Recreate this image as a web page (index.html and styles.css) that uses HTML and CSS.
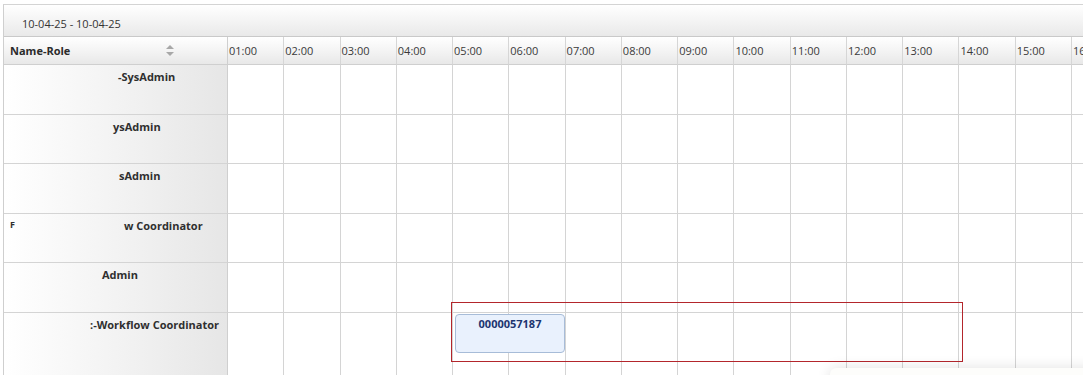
FILE: index.html
```html
<!DOCTYPE html>
<html lang="en">
<head>
  <meta charset="UTF-8">
  <meta name="viewport" content="width=device-width, initial-scale=1.0">
  <title>Scheduler - Timeline</title>
  <link rel="stylesheet" href="styles.css">
</head>
<body>
  <div class="scheduler">
    <div class="toolbar">
      <span class="range">10-04-25 - 10-04-25</span>
    </div>

    <div class="timeline" id="timeline">
      <div class="head-name">
        <span>Name-Role</span>
        <svg class="sort" width="8" height="11" viewBox="0 0 8 11">
          <path d="M4 0 L8 4 L0 4 Z" fill="#a8a8a8"/>
          <path d="M0 7 L8 7 L4 11 Z" fill="#a8a8a8"/>
        </svg>
      </div>
      <!-- hour headers + rows are generated below -->
    </div>

    <div class="selection"></div>
    <div class="event">0000057187</div>
  </div>
  <div class="popup-shadow"></div>

  <script>
    const rows = [
      { text: '-SysAdmin', indent: 114 },
      { text: 'ysAdmin', indent: 109 },
      { text: 'sAdmin', indent: 115 },
      { text: 'w Coordinator', indent: 120, stray: 'F' },
      { text: 'Admin', indent: 98 },
      { text: ':-Workflow Coordinator', indent: 86 }
    ];

    const timeline = document.getElementById('timeline');

    for (let h = 1; h <= 16; h++) {
      const th = document.createElement('div');
      th.className = 'head-hour';
      th.textContent = String(h).padStart(2, '0') + ':00';
      timeline.appendChild(th);
    }

    rows.forEach(row => {
      const name = document.createElement('div');
      name.className = 'row-name';
      if (row.stray) {
        const s = document.createElement('span');
        s.className = 'stray';
        s.textContent = row.stray;
        name.appendChild(s);
      }
      const t = document.createElement('span');
      t.className = 'label';
      t.style.marginLeft = row.indent + 'px';
      t.textContent = row.text;
      name.appendChild(t);
      timeline.appendChild(name);

      for (let h = 1; h <= 16; h++) {
        const slot = document.createElement('div');
        slot.className = 'slot';
        timeline.appendChild(slot);
      }
    });
  </script>
</body>
</html>
```

FILE: styles.css
```css
body {
  margin: 0;
  padding: 0;
  background-color: #ffffff;
  font-family: 'Open Sans', 'Noto Sans', sans-serif;
  font-size: 11px;
  color: #333333;
  overflow: hidden;
  width: 1083px;
  height: 375px;
}

.scheduler {
  position: relative;
  margin: 4px 0 0 3px;
  width: 1090px;
  border-top: 1px solid #d4d4d4;
  border-left: 1px solid #cfcfcf;
}

.toolbar {
  height: 31px;
  display: flex;
  align-items: center;
  padding-left: 18px;
  background: linear-gradient(to bottom, #ffffff 0%, #f4f4f4 50%, #e9e9e9 100%);
  border-bottom: 1px solid #c9c9c9;
}

.range {
  color: #333333;
  margin-top: 5px;
}

.timeline {
  display: grid;
  grid-template-columns: 224px repeat(16, 56.27px);
  grid-template-rows: 28px repeat(5, 49.6px) 70px;
}

.head-name,
.head-hour {
  display: flex;
  align-items: center;
  background: linear-gradient(to bottom, #ffffff 0%, #f3f3f3 55%, #e8e8e8 100%);
  border-bottom: 1px solid #cfcfcf;
  border-right: 1px solid #d6d6d6;
  box-sizing: border-box;
}

.head-name {
  justify-content: space-between;
  padding: 0 53px 0 6px;
  font-weight: bold;
  color: #2b2b2b;
  border-right-color: #cfcfcf;
}

.sort {
  display: block;
}

.head-hour {
  padding-left: 1px;
  color: #3a3a3a;
}

.row-name {
  position: relative;
  background: linear-gradient(to right, #ffffff 0%, #f3f3f3 50%, #e6e6e6 100%);
  border-bottom: 1px solid #d4d4d4;
  border-right: 1px solid #cfcfcf;
  box-sizing: border-box;
  font-weight: bold;
  color: #2f2f2f;
  padding-top: 4px;
  white-space: nowrap;
}

.label {
  display: inline-block;
}

.stray {
  position: absolute;
  left: 6px;
  top: 4px;
  font-size: 9px;
}

.slot {
  border-bottom: 1px solid #d4d4d4;
  border-right: 1px solid #d4d4d4;
  box-sizing: border-box;
}

.selection {
  position: absolute;
  left: 447px;
  top: 297px;
  width: 510px;
  height: 58px;
  border: 1px solid #b3262c;
  pointer-events: none;
}

.event {
  position: absolute;
  left: 451px;
  top: 309px;
  width: 110px;
  height: 39px;
  box-sizing: border-box;
  background-color: #e9f1fd;
  border: 1px solid #a7bcd8;
  border-radius: 4px;
  text-align: center;
  padding-top: 1px;
  font-weight: bold;
  color: #1d3570;
}

.popup-shadow {
  position: absolute;
  left: 830px;
  top: 368px;
  width: 300px;
  height: 40px;
  background-color: #fdfdfb;
  border-radius: 6px;
  box-shadow: 0 0 14px rgba(0, 0, 0, 0.12);
}
```
